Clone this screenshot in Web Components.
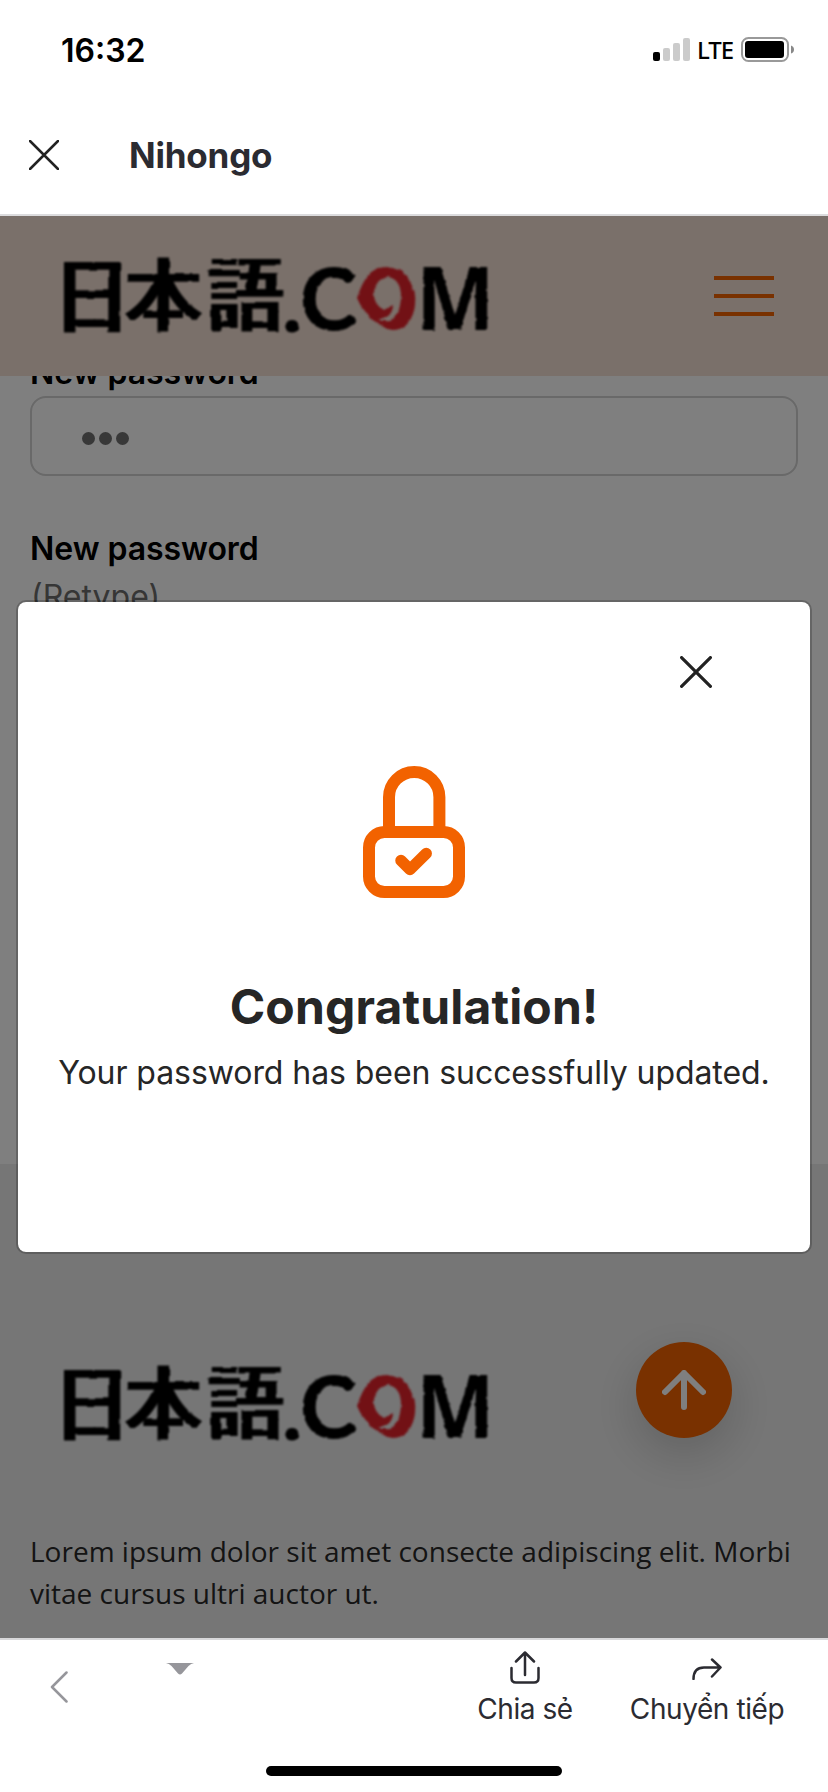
<!DOCTYPE html>
<html lang="vi">
<head>
<meta charset="utf-8">
<title>Nihongo</title>
<style>
html,body{margin:0;padding:0}
body{width:828px;height:1792px;overflow:hidden;background:#fff;font-family:Inter,"Noto Sans",sans-serif}
</style>
</head>
<body>
<phone-screen>
  <status-bar slot="top" time="16:32" network="LTE"></status-bar>
  <title-bar slot="top">Nihongo</title-bar>
  <web-view>
    <site-header slot="header"></site-header>
    <password-form></password-form>
    <site-footer slot="footer">Lorem ipsum dolor sit amet consecte adipiscing elit. Morbi vitae cursus ultri auctor ut.</site-footer>
    <success-dialog slot="dialog">
      <span slot="title">Congratulation!</span>
      Your password has been successfully updated.
    </success-dialog>
  </web-view>
  <bottom-bar slot="bottom"></bottom-bar>
</phone-screen>
<script>
const define = (name, html) => customElements.define(name, class extends HTMLElement {
  constructor() {
    super();
    const t = document.createElement('template');
    t.innerHTML = html;
    this.attachShadow({ mode: 'open' }).appendChild(t.content.cloneNode(true));
  }
  connectedCallback() {
    this.shadowRoot.querySelectorAll('[data-attr]').forEach(n => {
      n.textContent = this.getAttribute(n.dataset.attr);
    });
  }
});

define('phone-screen', `
<style>:host{display:flex;flex-direction:column;width:828px;height:1792px;background:#fff}</style>
<slot name="top"></slot><slot></slot><slot name="bottom"></slot>`);

define('status-bar', `
<style>
:host{display:flex;height:100px;box-sizing:border-box;padding:0 34px 0 61px;justify-content:space-between;align-items:center;color:#000}
.time{font-size:32px;font-weight:600;line-height:40px;margin-top:1px}
.right{display:flex;align-items:center;margin-bottom:1px}
.net{font:500 24px/32px "Noto Sans",sans-serif;letter-spacing:-1px;margin:1px 0 0 7px;width:44px}
svg{display:block}
</style>
<span class="time" data-attr="time"></span>
<div class="right">
<svg width="37" height="23" viewBox="0 0 37 23"><rect y="14" width="7" height="9" rx="2"/><g fill="#cbcbcb"><rect x="10" y="10" width="7" height="13" rx="2"/><rect x="20" y="5" width="7" height="18" rx="2"/><rect x="30" width="7" height="23" rx="2"/></g></svg>
<span class="net" data-attr="network"></span>
<svg width="53" height="25" viewBox="0 0 53 25"><rect x="1" y="1" width="46" height="23" rx="6.5" fill="none" stroke="#999" stroke-width="2"/><rect x="4" y="4" width="39" height="17" rx="3"/><path d="M50 8.500Q53 9.500 53 12.500T50 16.500Z" fill="#888"/></svg>
</div>`);

define('title-bar', `
<style>
:host{display:flex;box-sizing:border-box;height:116px;border-bottom:2px solid #dcdcde;padding:0 29px 4px;align-items:center;color:#2b2b31;font-size:35px;font-weight:700;line-height:44px;letter-spacing:-.2px}
svg{display:block;margin-right:70px}
</style>
<svg width="30" height="30" viewBox="0 0 30 30" fill="none" stroke="#222" stroke-width="2.500" stroke-linecap="round"><path d="M1 1 29 29M29 1 1 29"/></svg>
<slot></slot>`);

define('web-view', `
<style>
:host{display:flex;flex-direction:column;position:relative;height:1422px;overflow:hidden;background:#fff}
.body{flex:1;margin-top:-28px}
.shade{position:absolute;inset:0;z-index:5;background:rgba(0,0,0,.5)}
.dialog{position:absolute;z-index:6;left:16px;top:384px}
</style>
<slot name="header"></slot>
<div class="body"><slot></slot></div>
<slot name="footer"></slot>
<div class="shade"></div>
<div class="dialog"><slot name="dialog"></slot></div>`);

define('brand-logo', `
<style>
:host{display:block;width:430px;height:84px}
svg{display:block;overflow:visible}
.jp{font:500 80px "Noto Sans CJK JP",sans-serif}
.en{font:700 88px "Open Sans","Noto Sans",sans-serif}
.c{font:700 86px Lato,sans-serif}
</style>
<svg width="430" height="84" viewBox="60 252 430 84">
<defs>
<filter id="brush" x="-5%" y="-10%" width="110%" height="120%"><feTurbulence type="fractalNoise" baseFrequency=".05" numOctaves="2" seed="4" result="n"/><feMorphology in="SourceGraphic" operator="dilate" radius="2 0.1" result="d"/><feDisplacementMap in="d" in2="n" scale="3" xChannelSelector="R" yChannelSelector="G"/><feGaussianBlur stdDeviation=".8"/></filter>
<filter id="ink" x="-5%" y="-10%" width="110%" height="120%"><feTurbulence type="fractalNoise" baseFrequency=".12" numOctaves="2" seed="7" result="n"/><feDisplacementMap in="SourceGraphic" in2="n" scale="3" xChannelSelector="R" yChannelSelector="G"/><feGaussianBlur stdDeviation=".8"/></filter>
</defs>
<g class="jp" filter="url(#brush)">
<text transform="translate(53 326) scale(.97 1.02)">日</text>
<text transform="translate(125 325) scale(.96 1)">本</text>
<text transform="translate(207 324) scale(.96 1)">語</text>
</g>
<g class="en" filter="url(#ink)">
<text transform="translate(283 331) scale(.72)" stroke="#000" stroke-width="3" stroke-linejoin="round">.</text>
<text class="c" transform="translate(300 330)" stroke="#000" stroke-width="1">C</text>
<text transform="translate(360 324) scale(.78 .84)" fill="#e5232c" style="font-weight:300">O</text>
<text transform="translate(416 330) scale(.96 1)" textLength="82" lengthAdjust="spacingAndGlyphs">M</text>
<path d="M386 267Q402 268 409 280Q417 290 415 306Q412 323 402 328Q390 333 381 325Q391 322 396 315Q401 308 401 295Q400 278 387 277Q375 281 374 292Q373 304 384 310L393 305Q393 312 388 316L378 320Q363 314 357 298Q362 282 370 273Q377 267 386 267Z" fill="#e5232c"/>
</g>
</svg>`);

define('site-header', `
<style>
:host{display:flex;position:relative;z-index:2;box-sizing:border-box;height:160px;flex:none;background:#f5e1d5;padding:36px 54px 0 60px;justify-content:space-between}
.menu{display:flex;flex-direction:column;gap:14px;margin-top:24px;width:60px}
.menu i{display:block;height:4px;background:#f26200}
</style>
<brand-logo></brand-logo>
<div class="menu"><i></i><i></i><i></i></div>`);

define('password-form', `
<style>
:host{display:block;padding:0 30px;font-size:32px;line-height:48px;color:#000}
.label{font-weight:600;letter-spacing:-.05px;line-height:50px;height:48px}
.hint{color:#6c6c6c;padding-left:1px;line-height:50px;height:48px}
.field{display:flex;gap:4px;align-items:center;box-sizing:border-box;height:80px;border:2px solid #d2d2d2;border-radius:16px;padding-left:50px;margin-bottom:48px}
.field i{width:13px;height:13px;border-radius:50%;background:#717171;margin-top:4px}
</style>
<div class="label">New password</div>
<div class="field"><i></i><i></i><i></i></div>
<div class="label">New password</div>
<div class="hint">(Retype)</div>`);

define('site-footer', `
<style>
:host{display:block;box-sizing:border-box;height:474px;flex:none;background:#ededed;padding-top:178px}
.row{display:flex;justify-content:space-between;padding:0 96px 0 60px;height:188px}
brand-logo{margin-top:18px}
.up{width:96px;height:96px;border-radius:50%;background:#f26200;box-shadow:0 16px 48px rgba(0,0,0,.175);display:flex;align-items:center;justify-content:center}
p{margin:0 30px;font:28px/42px "Open Sans",sans-serif;color:#282828}
</style>
<div class="row"><brand-logo></brand-logo>
<div class="up"><svg width="44" height="40" viewBox="0 0 44 40" fill="none" stroke="#fff" stroke-width="6" stroke-linecap="round" stroke-linejoin="round"><path d="M22 37V3M3 22 22 3 41 22"/></svg></div></div>
<p><slot></slot></p>`);

define('success-dialog', `
<style>
:host{display:flex;flex-direction:column;align-items:center;box-sizing:border-box;width:796px;height:654px;border:2px solid rgba(0,0,0,.2);border-radius:10px;background:#fff;background-clip:padding-box;color:#262626;padding-top:54px}
.close{display:block;align-self:flex-end;margin-right:98px}
.lock{display:block;margin-top:78px}
h2{margin:79px 0 0;font-size:48px;line-height:60px;font-weight:700;letter-spacing:.15px}
p{margin:12px 0 0;font-size:32px;line-height:48px;white-space:nowrap;letter-spacing:-.07px}
</style>
<svg class="close" width="32" height="32" viewBox="0 0 32 32" fill="none" stroke="#222" stroke-width="3.200" stroke-linecap="round"><path d="M1.600 1.600 30.400 30.400M30.400 1.600 1.600 30.400"/></svg>
<svg class="lock" width="102" height="132" viewBox="0 0 102 132" fill="none" stroke="#f26200" stroke-width="12"><path d="M26 66V31.200a25.200 25.200 0 0 1 50.400 0V66"/><rect x="6" y="66" width="90" height="60" rx="15.500"/><path d="M38 94.500 47 103.500 63.200 87.500" stroke-width="11.500" stroke-linecap="round" stroke-linejoin="round"/></svg>
<h2><slot name="title"></slot></h2>
<p><slot></slot></p>`);

define('tool-button', `
<style>:host{display:flex;flex-direction:column;align-items:center;font-size:28px;line-height:36px;color:#2b2b31;white-space:nowrap;letter-spacing:-.42px}</style>
<slot name="icon"></slot><slot></slot>`);

define('bottom-bar', `
<style>
:host{display:flex;flex-direction:column;box-sizing:border-box;height:154px;border-top:2px solid #d8d8da;background:#fff;align-items:center}
.row{display:flex;width:100%;height:126px;align-items:flex-start}
svg{display:block;fill:none;stroke:#2b2b31;stroke-width:2.500;stroke-linecap:round;stroke-linejoin:round}
.back{margin:31px 0 0 50px;stroke:#96969b}
.tri{margin:23px 0 0 98px;fill:#96969b;stroke:none}
.share{width:94px;margin-left:284px;margin-top:11px}
.fwd{width:154px;margin-left:58px;margin-top:11px}
.fwd svg{margin:7px 0 11px}
.share svg{margin-bottom:7px}
.home{width:296px;height:10px;border-radius:5px;background:#000}
</style>
<div class="row">
<svg class="back" width="18" height="32" viewBox="0 0 18 32"><path d="M16.500 1.500 2 16 16.500 30.500"/></svg>
<svg class="tri" width="28" height="12" viewBox="0 0 28 12"><path d="M0 0H28Q25 .5 22.500 3L16 10.500Q14 12.600 12 10.500L5.500 3Q3 .5 0 0Z"/></svg>
<tool-button class="share"><svg slot="icon" width="30" height="33" viewBox="0 0 30 33"><path d="M1.500 17V27Q1.500 31.500 6 31.500H24Q28.500 31.500 28.500 27V17M15 24V1.500M6 10.500 15 1.500 24 10.500"/></svg>Chia sẻ</tool-button>
<tool-button class="fwd"><svg slot="icon" width="30" height="22" viewBox="0 0 30 22"><path d="M1.500 21Q1.500 9.500 12 9.500H28M20 1.500 28.500 9.500 20 18.500"/></svg>Chuyển tiếp</tool-button>
</div>
<div class="home"></div>`);
</script>
</body>
</html>
